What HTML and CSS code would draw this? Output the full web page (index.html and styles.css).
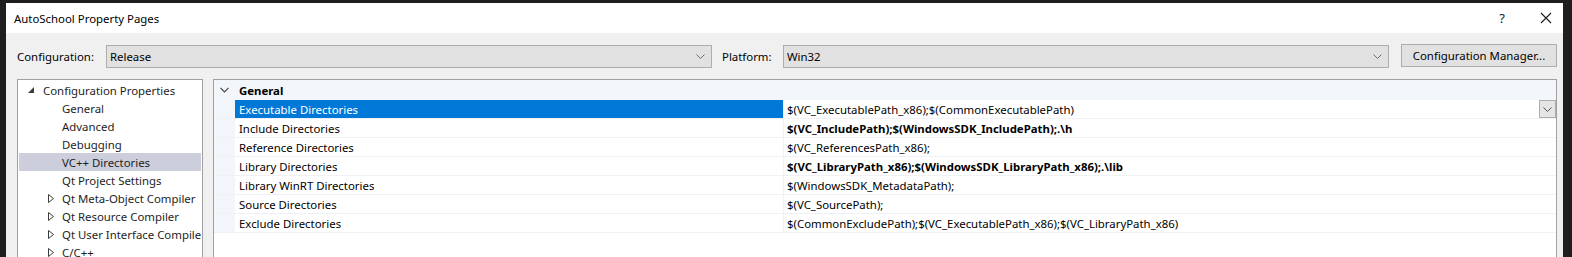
FILE: index.html
```html
<!DOCTYPE html>
<html lang="en">
<head>
    <meta charset="UTF-8">
    <title>AutoSchool Property Pages</title>
    <link rel="stylesheet" href="styles.css">
</head>
<body>
    <div class="dialog">
        <!-- Title bar -->
        <div class="titlebar">
            <span class="title">AutoSchool Property Pages</span>
            <span class="help">?</span>
            <svg class="close" width="12" height="12" viewBox="0 0 12 12">
                <path d="M1 1 L11 11 M11 1 L1 11" stroke="#1a1a1a" stroke-width="1.1" fill="none"/>
            </svg>
        </div>

        <!-- Configuration / Platform row -->
        <div class="toolbar">
            <span class="label cfg-label">Configuration:</span>
            <div class="combo">
                <span>Release</span>
                <svg class="chev" width="9" height="5" viewBox="0 0 9 5"><path d="M0.5 0.5 L4.5 4.5 L8.5 0.5" stroke="#707070" fill="none"/></svg>
            </div>
            <span class="label plat-label">Platform:</span>
            <div class="combo">
                <span>Win32</span>
                <svg class="chev" width="9" height="5" viewBox="0 0 9 5"><path d="M0.5 0.5 L4.5 4.5 L8.5 0.5" stroke="#707070" fill="none"/></svg>
            </div>
            <button class="btn">Configuration Manager...</button>
        </div>

        <div class="main">
            <!-- Tree of pages -->
            <div class="tree">
                <div class="node top">
                    <span class="tog"><svg width="7" height="7" viewBox="0 0 7 7"><polygon points="6,0 6,6 0,6" fill="#3c3c3c"/></svg></span>
                    Configuration Properties
                </div>
                <div class="node child"><span class="tog"></span>General</div>
                <div class="node child"><span class="tog"></span>Advanced</div>
                <div class="node child"><span class="tog"></span>Debugging</div>
                <div class="node child selected"><span class="tog"></span>VC++ Directories</div>
                <div class="node child"><span class="tog"></span>Qt Project Settings</div>
                <div class="node child">
                    <span class="tog"><svg width="6" height="9" viewBox="0 0 6 9"><polygon points="0.5,0.5 5.5,4.5 0.5,8.5" fill="none" stroke="#3c3c3c"/></svg></span>
                    Qt Meta-Object Compiler
                </div>
                <div class="node child">
                    <span class="tog"><svg width="6" height="9" viewBox="0 0 6 9"><polygon points="0.5,0.5 5.5,4.5 0.5,8.5" fill="none" stroke="#3c3c3c"/></svg></span>
                    Qt Resource Compiler
                </div>
                <div class="node child">
                    <span class="tog"><svg width="6" height="9" viewBox="0 0 6 9"><polygon points="0.5,0.5 5.5,4.5 0.5,8.5" fill="none" stroke="#3c3c3c"/></svg></span>
                    Qt User Interface Compiler
                </div>
                <div class="node child">
                    <span class="tog"><svg width="6" height="9" viewBox="0 0 6 9"><polygon points="0.5,0.5 5.5,4.5 0.5,8.5" fill="none" stroke="#3c3c3c"/></svg></span>
                    C/C++
                </div>
            </div>

            <!-- Property grid -->
            <div class="grid">
                <div class="category">
                    <span class="gutter"><svg width="9" height="6" viewBox="0 0 9 6"><path d="M0.5 0.8 L4.5 4.8 L8.5 0.8" stroke="#444" stroke-width="1.2" fill="none"/></svg></span>
                    <span class="cat-name">General</span>
                </div>
                <div class="prop active">
                    <span class="gutter"></span>
                    <span class="name">Executable Directories</span>
                    <span class="value">$(VC_ExecutablePath_x86);$(CommonExecutablePath)
                        <span class="drop"><svg width="9" height="5" viewBox="0 0 9 5"><path d="M0.5 0.5 L4.5 4.5 L8.5 0.5" stroke="#505050" fill="none"/></svg></span>
                    </span>
                </div>
                <div class="prop">
                    <span class="gutter"></span>
                    <span class="name">Include Directories</span>
                    <span class="value bold">$(VC_IncludePath);$(WindowsSDK_IncludePath);.\h</span>
                </div>
                <div class="prop">
                    <span class="gutter"></span>
                    <span class="name">Reference Directories</span>
                    <span class="value">$(VC_ReferencesPath_x86);</span>
                </div>
                <div class="prop">
                    <span class="gutter"></span>
                    <span class="name">Library Directories</span>
                    <span class="value bold">$(VC_LibraryPath_x86);$(WindowsSDK_LibraryPath_x86);.\lib</span>
                </div>
                <div class="prop">
                    <span class="gutter"></span>
                    <span class="name">Library WinRT Directories</span>
                    <span class="value">$(WindowsSDK_MetadataPath);</span>
                </div>
                <div class="prop">
                    <span class="gutter"></span>
                    <span class="name">Source Directories</span>
                    <span class="value">$(VC_SourcePath);</span>
                </div>
                <div class="prop">
                    <span class="gutter"></span>
                    <span class="name">Exclude Directories</span>
                    <span class="value">$(CommonExcludePath);$(VC_ExecutablePath_x86);$(VC_LibraryPath_x86)</span>
                </div>
            </div>
        </div>
    </div>
</body>
</html>
```

FILE: styles.css
```css
body {
    margin: 0;
    background-color: #1e1e1e;
    font-family: 'Noto Sans', 'Open Sans', sans-serif;
    font-size: 11.4px;
    color: #000;
    overflow: hidden;
}
.dialog {
    margin: 3px 0 0 6px;
    width: 1557px;
    height: 260px;
    background: #f0f0f0;
}

/* title bar */
.titlebar {
    height: 30px;
    background: #fff;
    display: flex;
    align-items: center;
    padding-left: 8px;
    box-sizing: border-box;
}
.title {
    flex: 1;
}
.help {
    font-size: 13px;
    color: #1a1a1a;
    margin-right: 35px;
}
.close {
    margin-right: 11px;
}

/* configuration row */
.toolbar {
    height: 46px;
    display: flex;
    align-items: flex-start;
    padding: 11px 6px 0 11px;
    box-sizing: border-box;
}
.label {
    height: 23px;
    line-height: 23px;
    margin-top: 1px;
}
.cfg-label {
    width: 89px;
}
.plat-label {
    width: 61px;
    margin-left: 10px;
}
.combo {
    width: 606px;
    height: 23px;
    margin-top: 1px;
    box-sizing: border-box;
    border: 1px solid #adadad;
    background: #e1e1e1;
    display: flex;
    align-items: center;
    justify-content: space-between;
    padding: 0 6px 0 3px;
}
.btn {
    width: 156px;
    height: 23px;
    margin-left: 12px;
    border: 1px solid #adadad;
    background: #e1e1e1;
    font-family: inherit;
    font-size: inherit;
    color: #000;
    padding: 0;
}

/* main area */
.main {
    display: flex;
    gap: 10px;
    padding: 0 6px 0 11px;
}
.tree {
    width: 186px;
    height: 200px;
    box-sizing: border-box;
    border: 1px solid #a0a0a0;
    background: #fff;
    padding-top: 1px;
    color: #1e1e1e;
}
.node {
    height: 18px;
    display: flex;
    align-items: center;
    white-space: nowrap;
    overflow: hidden;
    margin: 0 1px;
}
.node.top {
    padding-left: 9px;
}
.node.top .tog {
    width: 15px;
}
.node.child {
    padding-left: 29px;
}
.node.child .tog {
    width: 14px;
}
.tog {
    display: flex;
    align-items: center;
    flex-shrink: 0;
}
.selected {
    background: #cccedb;
}

/* property grid */
.grid {
    width: 1344px;
    height: 200px;
    box-sizing: border-box;
    border: 1px solid #a0a0a0;
    background: #fff;
}
.category {
    height: 20px;
    display: flex;
    align-items: center;
    background: #f2f5fa;
}
.gutter {
    width: 21px;
    height: 100%;
    flex-shrink: 0;
    display: flex;
    align-items: center;
    justify-content: center;
    background: #f2f5fa;
}
.cat-name {
    font-weight: bold;
    padding-left: 4px;
}
.prop {
    height: 19px;
    display: flex;
    align-items: stretch;
    border-bottom: 1px solid #f0f1f4;
    box-sizing: border-box;
}
.name {
    width: 548px;
    box-sizing: border-box;
    padding-left: 4px;
    display: flex;
    align-items: center;
    white-space: nowrap;
}
.value {
    flex: 1;
    border-left: 1px solid #f0f1f4;
    padding-left: 3px;
    display: flex;
    align-items: center;
    white-space: nowrap;
    position: relative;
}
.bold {
    font-weight: bold;
}
.active .name {
    background: #0078d7;
    color: #fff;
}
.drop {
    position: absolute;
    right: 0;
    top: 0;
    width: 17px;
    height: 18px;
    box-sizing: border-box;
    border: 1px solid #adadad;
    background: #e5e5e5;
    display: flex;
    align-items: center;
    justify-content: center;
}
```
